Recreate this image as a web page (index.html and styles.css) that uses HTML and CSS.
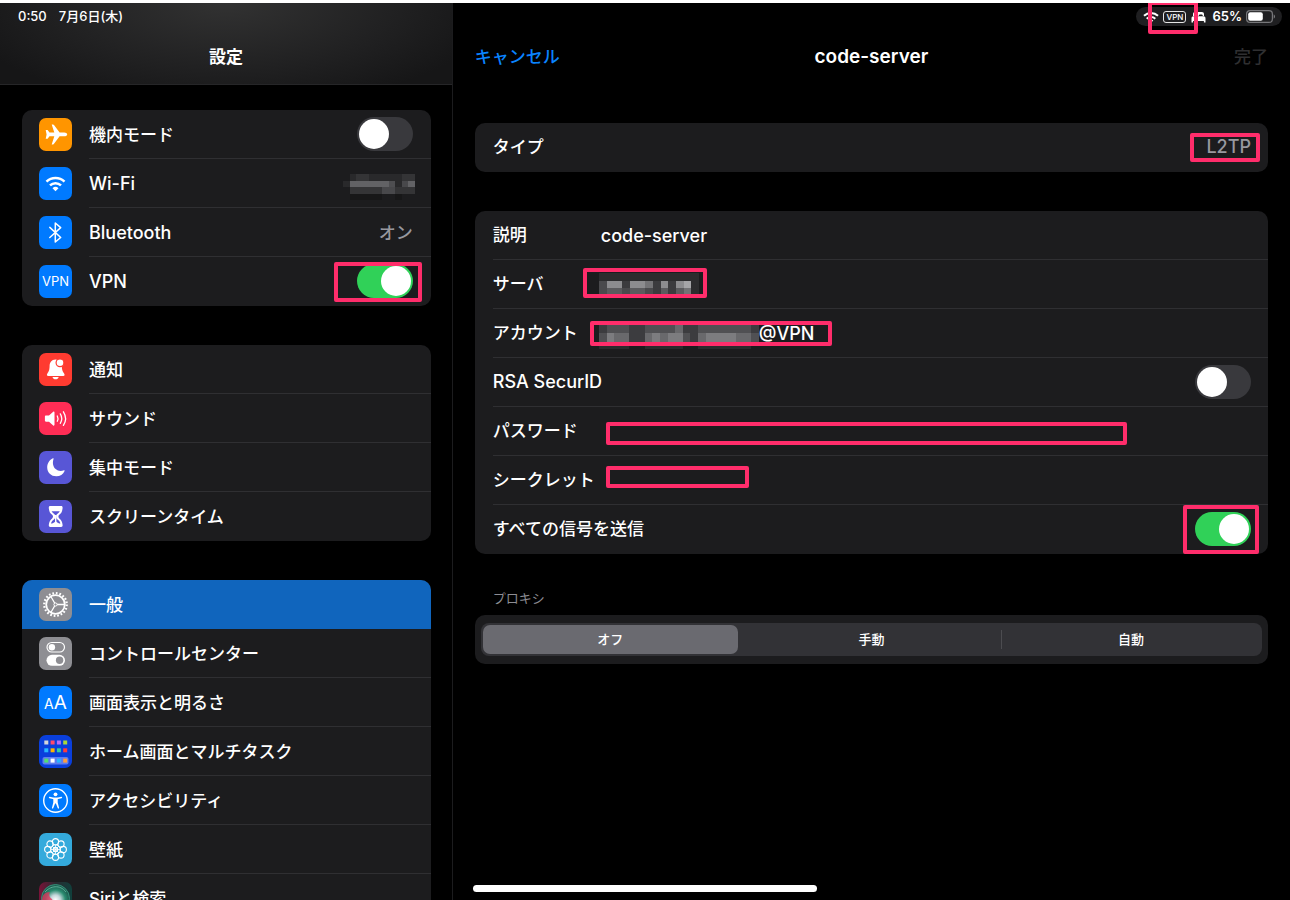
FILE: index.html
```html
<!DOCTYPE html>
<html lang="ja">
<head>
<meta charset="utf-8">
<meta name="viewport" content="width=device-width, initial-scale=1">
<title>設定</title>
<link rel="stylesheet" href="styles.css">
</head>
<body>
<div class="screen">
  <aside class="sidebar">
    <header class="sidebar-head">
      <div class="clock"><time>0:50</time><span>7月6日(木)</span></div>
      <h1 class="title">設定</h1>
    </header>

    <nav class="menu">
      <section class="card">
        <div class="item">
          <svg class="icon" viewBox="0 0 33 33"><rect width="33" height="33" rx="7" fill="#ff9500"/><path fill="#fff" d="M28.2 16.4c0-1-1.3-1.9-3-1.9h-4.6L15 7c-.3-.4-.6-.6-1-.6h-1.3l2.6 8.1h-4.8L8.600 12H6.700l.9 4.400-.9 4.400h1.900l1.900-2.500h4.800l-2.600 8.100H14c.4 0 .7-.2 1-.6l5.600-7.500h4.600c1.700 0 3-.9 3-1.900z"/></svg>
          <div class="item-body"><label for="airplane">機内モード</label><input class="switch" id="airplane" type="checkbox"></div>
        </div>
        <div class="item">
          <svg class="icon" viewBox="0 0 33 33"><rect width="33" height="33" rx="7" fill="#007aff"/><path fill="none" stroke="#fff" stroke-width="2.500" d="M7.500 14.700a13 13 0 0 1 18 0M11 18.400a8 8 0 0 1 11 0"/><path fill="#fff" d="M16.500 24.200l-3-3a4.300 4.300 0 0 1 6 0z"/></svg>
          <div class="item-body"><span class="latin">Wi-Fi</span>
            <svg class="mosaic mosaic-wifi" viewBox="0 0 12 4" preserveAspectRatio="none" shape-rendering="crispEdges"><path fill="#29292b" d="M1 0h1v1h-1zM4 0h5v1h-5zM0 1h1v1h-1zM8 1h1v1h-1z"/><path fill="#343436" d="M2 0h2v1h-2zM9 0h2v1h-2zM1 2h5v1h-5zM8 2h3v1h-3z"/><path fill="#48484b" d="M6 2h2v1h-2zM9 1h1v1h-1z"/><path fill="#626265" d="M1 1h6v1h-6zM10 1h1v1h-1z"/><path fill="#4e4e51" d="M7 1h1v1h-1z"/><path fill="#171718" d="M1 3h5v1h-5zM8 3h1v1h-1z"/></svg>
          </div>
        </div>
        <div class="item">
          <svg class="icon" viewBox="0 0 33 33"><rect width="33" height="33" rx="7" fill="#007aff"/><path fill="none" stroke="#fff" stroke-width="1.500" stroke-linejoin="round" stroke-linecap="round" d="M10.800 11.400L21.700 21.500 16.300 26V7l5.400 4.600L10.800 21.500"/></svg>
          <div class="item-body"><span class="latin">Bluetooth</span><span class="value">オン</span></div>
        </div>
        <div class="item">
          <span class="icon icon-vpn">VPN</span>
          <div class="item-body"><label class="latin" for="vpn">VPN</label><input class="switch" id="vpn" type="checkbox" checked></div>
          <i class="mark mark-vpn"></i>
        </div>
      </section>

      <section class="card">
        <div class="item">
          <svg class="icon" viewBox="0 0 33 33"><rect width="33" height="33" rx="7" fill="#ff3b30"/><path fill="#fff" d="M16.500 6.500c-4 0-5.800 3-5.900 6.600-.1 4.400-1.100 5.900-2.200 7.300-.9 1.200-.6 2.600 1 2.600h14.800c1.500 0 1.800-1.400.9-2.600-1.200-1.500-2.200-3-2.300-7.300-.1-3.600-2.200-6.600-6.300-6.600zM13.500 24h6.200c-.4 1.400-1.600 2.300-3.100 2.300s-2.700-.9-3.100-2.300z"/><circle cx="21" cy="9.800" r="3.900" fill="#fff" stroke="#ff3b30" stroke-width="1.200"/></svg>
          <div class="item-body"><span>通知</span></div>
        </div>
        <div class="item">
          <svg class="icon" viewBox="0 0 33 33"><rect width="33" height="33" rx="7" fill="#ff2d55"/><path fill="#fff" d="M7 13.500h3l4.200-3.700c.6-.5 1.300-.2 1.300.6v12.400c0 .8-.7 1.100-1.300.6L10 19.700H7c-.7 0-1.100-.4-1.100-1.100v-4c0-.7.4-1.100 1.100-1.100z"/><path fill="none" stroke="#fff" stroke-width="1.300" stroke-linecap="round" d="M18.300 14a5.500 5.500 0 0 1 0 5.200M21.300 11.900a9 9 0 0 1 0 9.400M24.400 9.800a12.500 12.500 0 0 1 0 13.600"/></svg>
          <div class="item-body"><span>サウンド</span></div>
        </div>
        <div class="item">
          <svg class="icon" viewBox="0 0 33 33"><rect width="33" height="33" rx="7" fill="#5856d6"/><path fill="#fff" d="M14.600 7.800c-1.500 4.600-.3 8.200 2 10.200 2.300 2 5.400 2.400 8.400 1.200.5-.2.800.2.600.7-1.400 3.300-4.500 5.400-8.300 5.400-5.200 0-9.100-3.800-9.100-8.800 0-4 2.200-7.600 5.700-9.200.5-.3.900 0 .7.500z"/></svg>
          <div class="item-body"><span>集中モード</span></div>
        </div>
        <div class="item">
          <svg class="icon" viewBox="0 0 33 33"><rect width="33" height="33" rx="7" fill="#5856d6"/><path fill="#fff" d="M11.300 6h10.800c1.200 0 1.600.8 1.500 2-.3 3.600-1.200 5.300-3.300 6.800-1.200.8-1.200 2.700 0 3.600 2.100 1.500 3 3.300 3.300 6.600.1 1.200-.3 2-1.500 2H11.300c-1.200 0-1.600-.8-1.500-2 .3-3.300 1.200-5.100 3.300-6.600 1.200-.9 1.200-2.800 0-3.600-2.100-1.500-3-3.200-3.300-6.800-.1-1.200.3-2 1.500-2z"/><path fill="#5856d6" d="M12.600 11.200h8.200c-.5 1-1.200 1.600-2 2.200-1.500 1.200-1.700 2-1.700 3.200 0 1.500.4 2.300 1.700 3.200 1.400 1 2.300 2.300 2.600 3.700-1.600-.2-2.900-.8-3.800-1.600-.5-.4-1.300-.4-1.800 0-.9.800-2.200 1.400-3.800 1.600.3-1.400 1.200-2.700 2.600-3.700 1.300-.9 1.700-1.700 1.700-3.200 0-1.200-.2-2-1.700-3.200-.8-.6-1.500-1.200-2-2.200z"/><path stroke="#fff" stroke-width="1.400" d="M16.700 15v7"/></svg>
          <div class="item-body"><span>スクリーンタイム</span></div>
        </div>
      </section>

      <section class="card">
        <div class="item selected">
          <svg class="icon" viewBox="0 0 33 33"><rect width="33" height="33" rx="7" fill="#8e8e93"/><g fill="none" stroke="#fff"><circle cx="16.500" cy="16.500" r="11.300" stroke-width="2.200" stroke-dasharray="1.750 1.800"/><circle cx="16.500" cy="16.500" r="9.300" stroke-width="1.800"/><path stroke-width="1.300" d="M16.500 16.500h9M16.500 16.500L12 8.700M16.500 16.500L12 24.300"/><circle cx="16.500" cy="16.500" r="1.600" stroke-width="1" fill="#8e8e93"/></g></svg>
          <div class="item-body"><span>一般</span></div>
        </div>
        <div class="item">
          <svg class="icon" viewBox="0 0 33 33"><rect width="33" height="33" rx="7" fill="#8e8e93"/><rect x="8" y="5.500" width="17.500" height="9.500" rx="4.750" fill="none" stroke="#fff" stroke-width="1.200"/><circle cx="12.900" cy="10.200" r="3.200" fill="#fff"/><rect x="7.500" y="17.800" width="18.500" height="11" rx="5.500" fill="#fff"/><circle cx="20.600" cy="23.300" r="3.700" fill="#8e8e93"/></svg>
          <div class="item-body"><span>コントロールセンター</span></div>
        </div>
        <div class="item">
          <span class="icon icon-text"><small>A</small>A</span>
          <div class="item-body"><span>画面表示と明るさ</span></div>
        </div>
        <div class="item">
          <svg class="icon" viewBox="0 0 33 33"><rect width="33" height="33" rx="7" fill="#0a3fdc"/><rect x="3.500" y="22" width="26" height="7.500" rx="2" fill="#5f7df0"/><path fill="#d5d5da" d="M5.300 5.500h4v4h-4z"/><path fill="#ff4a6a" d="M11.600 5.500h4v4h-4z"/><path fill="#b56cf5" d="M17.900 5.500h4v4h-4z"/><path fill="#a9d83a" d="M24.200 5.500h4v4h-4z"/><path fill="#27b5ff" d="M5.300 13.300h4v4h-4z"/><path fill="#ffb400" d="M11.600 13.300h4v4h-4z"/><path fill="#34cf9c" d="M17.900 13.300h4v4h-4z"/><path fill="#ff3b3b" d="M24.200 13.300h4v4h-4z"/><path fill="#52e070" d="M5.300 23.600h4v4h-4z"/><path fill="#fff" d="M11.600 23.600h4v4h-4z"/><path fill="#27b5ff" d="M17.900 23.600h4v4h-4z"/><path fill="#ff9d3c" d="M24.200 23.600h4v4h-4z"/></svg>
          <div class="item-body"><span>ホーム画面とマルチタスク</span></div>
        </div>
        <div class="item">
          <svg class="icon" viewBox="0 0 33 33"><rect width="33" height="33" rx="7" fill="#007aff"/><circle cx="16.500" cy="16.500" r="11.800" fill="none" stroke="#fff" stroke-width="1.400"/><circle cx="16.500" cy="10.300" r="1.900" fill="#fff"/><path fill="none" stroke="#fff" stroke-width="1.500" stroke-linecap="round" stroke-linejoin="round" d="M10.600 13.500l4.400 1h3l4.400-1"/><path fill="#fff" d="M14.300 13.800h4.400v4.600l1.400 5.600c.1.600-1 .9-1.300.2l-1.900-4.800h-.8l-1.900 4.800c-.3.700-1.400.4-1.300-.2l1.400-5.600z"/></svg>
          <div class="item-body"><span>アクセシビリティ</span></div>
        </div>
        <div class="item">
          <svg class="icon" viewBox="0 0 33 33"><rect width="33" height="33" rx="7" fill="#34aadc"/><g fill="none" stroke="#fff" stroke-width="1.100"><circle cx="16.500" cy="8.700" r="3.100"/><circle cx="22" cy="11" r="3.100"/><circle cx="24.300" cy="16.500" r="3.100"/><circle cx="22" cy="22" r="3.100"/><circle cx="16.500" cy="24.300" r="3.100"/><circle cx="11" cy="22" r="3.100"/><circle cx="8.700" cy="16.500" r="3.100"/><circle cx="11" cy="11" r="3.100"/><circle cx="16.500" cy="16.500" r="2.200"/><circle cx="16.500" cy="16.500" r="4.800" stroke-dasharray="2.200 1.570"/><path d="M16.500 11.700v9.600M11.700 16.500h9.600M13.100 13.100l6.800 6.800M19.900 13.100l-6.800 6.800" stroke-width=".8"/></g></svg>
          <div class="item-body"><span>壁紙</span></div>
        </div>
        <div class="item">
          <svg class="icon" viewBox="0 0 33 33"><defs><linearGradient id="siri-bg"><stop offset="0" stop-color="#7a1238"/><stop offset=".5" stop-color="#2a2a30"/><stop offset="1" stop-color="#10403c"/></linearGradient><radialGradient id="siri-orb" cx=".5" cy=".55"><stop offset="0" stop-color="#fff"/><stop offset=".35" stop-color="#c3d6da"/><stop offset=".7" stop-color="#2a8c70"/><stop offset="1" stop-color="#1f5c50"/></radialGradient></defs><rect width="33" height="33" rx="7" fill="url(#siri-bg)"/><circle cx="16.500" cy="16.500" r="14" fill="url(#siri-orb)" stroke="#38a184" stroke-width=".8"/><path fill="#e5305a" fill-opacity=".75" d="M3 18c0-5 3-8 8-8-2 3 0 6 2 7s-6 6-10 1z"/><path fill="none" stroke="#6fd0b0" stroke-width=".7" d="M6 10c5-6 15-8 21 0"/></svg>
          <div class="item-body"><span>Siriと検索</span></div>
        </div>
      </section>
    </nav>
  </aside>

  <main class="detail">
    <div class="status">
      <svg class="st-wifi" viewBox="0 0 16 12"><path fill="none" stroke="#fff" stroke-width="2" d="M1 4.800a10.200 10.200 0 0 1 14 0M3.700 7.700a6.200 6.200 0 0 1 8.600 0"/><path fill="#fff" d="M8 11.800L5.700 9.500a3.300 3.300 0 0 1 4.600 0z"/></svg>
      <span class="st-vpn">VPN</span>
      <svg class="st-bed" viewBox="0 0 15 12"><path fill="#fff" d="M2 5V3.200C2 1.900 2.800 1 4.100 1h6.800C12.200 1 13 1.900 13 3.200V5h-1.200c0-1-.5-1.500-1.300-1.500H9c-.7 0-1.200.5-1.200 1.500h-.6c0-1-.5-1.500-1.200-1.500H4.500C3.700 3.500 3.200 4 3.200 5zM2.500 5.300h10c1.300 0 2 .8 2 2.100v4h-1.600V9.900H2.100v1.500H.5v-4c0-1.300.7-2.100 2-2.100z"/></svg>
      <span class="st-pct">65%</span>
      <svg class="st-batt" viewBox="0 0 30 13"><rect x=".6" y=".6" width="25.800" height="11.800" rx="3.500" fill="none" stroke="#77777a" stroke-width="1.200"/><rect x="2.200" y="2.200" width="14.600" height="8.600" rx="2" fill="#fff"/><path fill="#77777a" d="M27.700 4.300c1.800.7 1.800 3.700 0 4.400z"/></svg>
      <i class="mark mark-status"></i>
    </div>

    <header class="detail-head">
      <button class="nav-btn" type="button">キャンセル</button>
      <h2 class="title">code-server</h2>
      <button class="nav-btn done" type="button" disabled>完了</button>
    </header>

    <form class="form">
      <section class="card">
        <div class="field"><span>タイプ</span><span class="value latin type">L2TP<i class="mark mark-type"></i></span></div>
      </section>

      <section class="card">
        <div class="field"><label for="desc">説明</label><input class="text" id="desc" type="text" value="code-server"></div>
        <div class="field"><span>サーバ</span>
          <svg class="mosaic mosaic-server" viewBox="0 0 13 3" preserveAspectRatio="none" shape-rendering="crispEdges"><path fill="#2c2c2e" d="M0 0h13v1h-13zM12 1h1v2h-1z"/><path fill="#3b3b3e" d="M3 1h1v1h-1zM7 1h1v2h-1zM9 1h1v2h-1z"/><path fill="#4a4a4d" d="M0 1h1v2h-1zM3 2h1v1h-1zM6 2h1v1h-1z"/><path fill="#5b5b5e" d="M1 2h2v1h-2zM4 2h2v1h-2zM8 2h1v1h-1zM10 2h1v1h-1z"/><path fill="#737376" d="M6 1h1v1h-1zM11 2h1v1h-1z"/><path fill="#8c8c8f" d="M1 1h2v1h-2zM4 1h2v1h-2zM8 1h1v1h-1zM10 1h1v1h-1z"/><path fill="#a5a5a8" d="M11 1h1v1h-1z"/></svg>
          <i class="mark mark-server"></i>
        </div>
        <div class="field"><label for="account">アカウント</label>
          <svg class="mosaic mosaic-account" viewBox="0 0 21 12" preserveAspectRatio="none" shape-rendering="crispEdges"><path fill="#3c3c3f" d="M0 0h21v4h-21zM4 4h2v5h-2zM12 4h1v5h-1z"/><path fill="#505053" d="M1 0h3v4h-3zM6 0h5v4h-5zM13 0h7v4h-7zM0 4h1v5h-1zM11 4h1v5h-1zM20 4h1v5h-1z"/><path fill="#69696c" d="M2 4h2v5h-2zM6 4h5v5h-5zM10 0h1v4h-1zM13 4h7v5h-7z"/><path fill="#7c7c7f" d="M1 4h1v5h-1zM7 4h1v5h-1zM9 4h2v5h-2zM14 4h4v5h-4z"/><path fill="#2b2b2d" d="M0 9h4v3h-4zM6 9h5v3h-5zM13 9h7v3h-7z"/></svg>
          <input class="text" id="account" type="text" value="@VPN">
          <i class="mark mark-account"></i>
        </div>
        <div class="field"><label class="latin" for="rsa">RSA SecurID</label><input class="switch" id="rsa" type="checkbox"></div>
        <div class="field"><label for="password">パスワード</label><input class="text" id="password" type="password"><i class="mark mark-password"></i></div>
        <div class="field"><label for="secret">シークレット</label><input class="text" id="secret" type="password"><i class="mark mark-secret"></i></div>
        <div class="field"><label for="sendall">すべての信号を送信</label><input class="switch" id="sendall" type="checkbox" checked><i class="mark mark-send"></i></div>
      </section>

      <fieldset class="proxy">
        <legend>プロキシ</legend>
        <div class="segment-card">
          <div class="segments">
            <label><input type="radio" name="proxy" checked><span>オフ</span></label>
            <label><input type="radio" name="proxy"><span>手動</span></label>
            <label><input type="radio" name="proxy"><span>自動</span></label>
          </div>
        </div>
      </fieldset>
    </form>
  </main>
  <div class="home-bar"></div>
</div>
</body>
</html>
```
FILE: styles.css
```css
* {
  box-sizing: border-box;
}

body {
  margin: 0;
  background: #000;
  color: #fff;
  font-family: Inter, "Noto Sans CJK JP", sans-serif;
  font-size: 17px;
  font-weight: 500;
  line-height: 24px;
}

input,
button {
  font: inherit;
  color: inherit;
}

.screen {
  display: flex;
  height: 100vh;
  overflow: hidden;
  border-top: 3px solid #fff;
}

.latin {
  font-size: 18px;
}

/* Sidebar */
.sidebar {
  flex: 0 0 35.1%;
  border-right: 1px solid #1c1c1e;
}

.sidebar-head {
  height: 82px;
  border-bottom: 1px solid #262628;
  background: radial-gradient(ellipse 60% 130% at 50% 0, #323232, #202021 65%, #161617);
}

.clock {
  display: flex;
  gap: 12px;
  padding: 3px 18px 0;
  font-size: 13px;
  line-height: 20px;
}

.title {
  margin: 0;
  font-size: 17px;
  font-weight: 600;
  line-height: 24px;
  text-align: center;
}

.sidebar-head .title {
  margin-top: 19px;
}

.menu {
  display: flex;
  flex-direction: column;
  gap: 39px;
  padding: 25px 21px 0 22px;
}

.card {
  border-radius: 10px;
  background: #1c1c1e;
}

.item {
  position: relative;
  display: flex;
  align-items: center;
  height: 49px;
  padding-left: 17px;
}

.icon {
  flex: none;
  width: 33px;
  height: 33px;
}

.icon-vpn,
.icon-text {
  display: flex;
  align-items: baseline;
  justify-content: center;
  border-radius: 7px;
  background: #007aff;
  font-size: 13px;
  font-weight: 400;
  line-height: 33px;
}

.icon-text {
  font-size: 19px;
}

.icon-text small {
  font-size: 14px;
}

.item-body {
  display: flex;
  flex: 1;
  align-items: center;
  justify-content: space-between;
  height: 49px;
  margin-left: 17px;
  padding-right: 18px;
  border-bottom: 1px solid #2f2f32;
}

.item-body > span,
.item-body > label {
  padding-top: 2px;
}

.item:last-child .item-body,
.selected .item-body {
  border-bottom-color: transparent;
}

.selected {
  border-radius: 10px 10px 0 0;
  background: #1065bd;
}

.value {
  color: #98989f;
  font-weight: 500;
}

/* Toggle switch */
.switch {
  position: relative;
  flex: none;
  width: 56px;
  height: 34px;
  margin: 0;
  border-radius: 17px;
  background: #39393d;
  appearance: none;
}

.switch::before {
  content: "";
  position: absolute;
  top: 2px;
  left: 2px;
  width: 30px;
  height: 30px;
  border-radius: 50%;
  background: #fff;
}

.switch:checked {
  background: #30d158;
}

.switch:checked::before {
  left: 24px;
}

/* Detail pane */
.detail {
  position: relative;
  flex: 1;
  padding: 0 22px;
}

.detail .title {
  font-size: 19px;
}

.status {
  position: absolute;
  top: 4px;
  right: 8px;
  display: flex;
  align-items: center;
  height: 19px;
  padding: 0 6px 0 7px;
  border-radius: 10px;
  background: #1f1f21;
  font-size: 13px;
  font-weight: 600;
  line-height: 19px;
}

.st-wifi {
  width: 16px;
  height: 12px;
}

.st-vpn {
  width: 23px;
  margin-left: 4px;
  border: 1px solid #e5e5e5;
  border-radius: 3px;
  font-size: 8px;
  font-weight: 500;
  line-height: 10px;
  text-align: center;
}

.st-bed {
  width: 15px;
  height: 12px;
  margin-left: 5px;
}

.st-pct {
  margin-left: 6px;
}

.st-batt {
  width: 30px;
  height: 13px;
  margin-left: 4px;
}

.detail-head {
  display: grid;
  grid-template-columns: 1fr auto 1fr;
  align-items: center;
  height: 120px;
  padding-bottom: 12px;
}

.nav-btn {
  justify-self: start;
  padding: 0;
  border: 0;
  background: none;
  color: #0a84ff;
}

.nav-btn.done {
  justify-self: end;
  color: #2f2f31;
}

.form {
  display: flex;
  flex-direction: column;
  gap: 39px;
}

.field {
  position: relative;
  display: flex;
  align-items: center;
  height: 49px;
  margin-left: 18px;
  padding-right: 17px;
  border-bottom: 1px solid #2f2f32;
}

.field:last-child {
  border-bottom-color: transparent;
}

.field > :first-child {
  flex: none;
  min-width: 106px;
}

.field .switch,
.type {
  margin-left: auto;
}

.type {
  position: relative;
}

.text {
  flex: 1;
  min-width: 0;
  padding: 2px 2px 0;
  border: 0;
  outline: 0;
  background: none;
  font-size: 18px;
}

/* Pixelated values */
.mosaic {
  flex: none;
}

.mosaic-wifi {
  width: 78px;
  height: 26px;
  margin-top: 8px;
  margin-right: -8px;
}

.mosaic-server {
  width: 100px;
  height: 23px;
}

.mosaic-account {
  width: 160px;
  height: 24px;
  margin-top: 8px;
}

#account {
  padding-left: 0;
}

/* Highlight boxes drawn over the content */
.mark {
  position: absolute;
  border: 4px solid #ff2d6b;
  border-radius: 2px;
  pointer-events: none;
}

.mark-vpn {
  top: 5px;
  right: 9px;
  width: 88px;
  height: 40px;
}

.mark-status {
  top: -6px;
  left: 12px;
  width: 50px;
  height: 33px;
}

.mark-type {
  top: -2px;
  right: -9px;
  width: 70px;
  height: 29px;
}

.mark-server {
  top: 8px;
  left: 90px;
  width: 124px;
  height: 30px;
}

.mark-account {
  top: 12px;
  left: 97px;
  width: 242px;
  height: 25px;
}

.mark-password {
  top: 15px;
  left: 113px;
  right: 141px;
  height: 23px;
}

.mark-secret {
  top: 10px;
  left: 113px;
  width: 143px;
  height: 22px;
}

.mark-send {
  top: 0;
  right: 9px;
  width: 76px;
  height: 49px;
}

/* Proxy selector */
.proxy {
  min-width: 0;
  margin: -7px 0 0;
  padding: 0;
  border: 0;
}

.proxy legend {
  padding: 0 18px 5px;
  color: #8d8d93;
  font-size: 13px;
  font-weight: 400;
  line-height: 24px;
}

.segment-card {
  padding: 8px 6px;
  border-radius: 10px;
  background: #1c1c1e;
}

.segments {
  display: grid;
  grid-template-columns: repeat(3, 1fr);
  padding: 2px;
  border-radius: 8px;
  background: #323236;
}

.segments label {
  position: relative;
  font-size: 13px;
  line-height: 29px;
  text-align: center;
}

.segments label:first-child {
  padding-right: 4px;
}

.segments label:last-child {
  border-left: 1px solid #48484c;
  border-image: linear-gradient(transparent 20%, #4c4c50 20% 80%, transparent 80%) 1;
}

.segments input {
  position: absolute;
  inset: 0;
  margin: 0;
  opacity: 0;
}

.segments span {
  display: block;
  border-radius: 7px;
}

.segments input:checked + span {
  background: #6a6a70;
}

.home-bar {
  position: absolute;
  bottom: 8px;
  left: 50%;
  width: 344px;
  height: 7px;
  border-radius: 4px;
  background: #fff;
  transform: translateX(-50%);
}
```
